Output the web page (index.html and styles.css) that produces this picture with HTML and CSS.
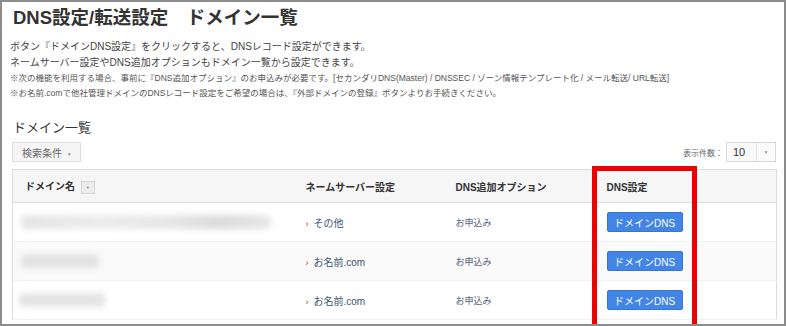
FILE: index.html
```html
<!DOCTYPE html>
<html lang="ja">
<head>
    <meta charset="UTF-8">
    <title>DNS設定/転送設定 ドメイン一覧</title>
    <link rel="stylesheet" href="styles.css">
</head>
<body>
    <div class="frame">
        <h1 class="title">DNS設定/転送設定　ドメイン一覧</h1>
        <div class="intro">
            <p class="lead">ボタン『ドメインDNS設定』をクリックすると、DNSレコード設定ができます。</p>
            <p class="lead">ネームサーバー設定やDNS追加オプションもドメイン一覧から設定できます。</p>
            <p class="note">※次の機能を利用する場合、事前に『DNS追加オプション』のお申込みが必要です。[セカンダリDNS(Master) / DNSSEC / ゾーン情報テンプレート化 / メール転送/ URL転送]</p>
            <p class="note">※お名前.comで他社管理ドメインのDNSレコード設定をご希望の場合は、『外部ドメインの登録』ボタンよりお手続きください。</p>
        </div>

        <h2 class="subtitle">ドメイン一覧</h2>

        <div class="toolbar">
            <button class="filter-btn">検索条件 <span class="caret">▼</span></button>
            <div class="per-page">
                <span>表示件数：</span>
                <div class="select">
                    <span class="select-value">10</span>
                    <span class="select-arrow">▼</span>
                </div>
            </div>
        </div>

        <div class="table-wrap">
            <table class="domains">
                <colgroup>
                    <col class="c-name">
                    <col class="c-ns">
                    <col class="c-opt">
                    <col class="c-dns">
                </colgroup>
                <thead>
                    <tr>
                        <th>ドメイン名 <span class="sort">▼</span></th>
                        <th>ネームサーバー設定</th>
                        <th>DNS追加オプション</th>
                        <th>DNS設定</th>
                    </tr>
                </thead>
                <tbody>
                    <tr>
                        <td><span class="blur blur-long"></span></td>
                        <td><a class="ns-link" href="#"><span class="arrow">›</span>その他</a></td>
                        <td><a class="opt-link" href="#">お申込み</a></td>
                        <td><button class="dns-btn">ドメインDNS</button></td>
                    </tr>
                    <tr class="alt">
                        <td><span class="blur blur-short"></span></td>
                        <td><a class="ns-link" href="#"><span class="arrow">›</span>お名前.com</a></td>
                        <td><a class="opt-link" href="#">お申込み</a></td>
                        <td><button class="dns-btn">ドメインDNS</button></td>
                    </tr>
                    <tr>
                        <td><span class="blur blur-mid"></span></td>
                        <td><a class="ns-link" href="#"><span class="arrow">›</span>お名前.com</a></td>
                        <td><a class="opt-link" href="#">お申込み</a></td>
                        <td><button class="dns-btn">ドメインDNS</button></td>
                    </tr>
                </tbody>
            </table>
            <div class="highlight"></div>
        </div>
    </div>
</body>
</html>
```

FILE: styles.css
```css
html {
    font-family: "Liberation Sans", "Noto Sans CJK JP", sans-serif;
    color: #333;
}

body {
    margin: 0;
}

.frame {
    box-sizing: border-box;
    width: 786px;
    height: 326px;
    border: 2px solid #8c8c8c;
    background: #fff;
    overflow: hidden;
}

.title {
    margin: 4px 0 0 11px;
    font-size: 18.5px;
    line-height: 24px;
    font-weight: bold;
    color: #333;
}

.intro {
    margin: 9px 0 0 8px;
}

.intro p {
    margin: 0;
    white-space: nowrap;
}

.lead {
    font-size: 10px;
    line-height: 16px;
    color: #444;
}

.note {
    font-size: 8.5px;
    line-height: 15px;
    color: #555;
}

.subtitle {
    margin: 18px 0 0 11px;
    font-size: 13px;
    line-height: 18px;
    font-weight: normal;
    color: #333;
}

.toolbar {
    display: flex;
    justify-content: space-between;
    align-items: flex-end;
    margin: 5px 8px 0 10px;
}

.filter-btn {
    height: 20px;
    padding: 0 8px 0 9px;
    border: 1px solid #dcdcdc;
    background: #f5f5f5;
    font-family: inherit;
    font-size: 10px;
    color: #666;
}

.caret {
    font-size: 5px;
    color: #999;
    vertical-align: middle;
    margin-left: 2px;
}

.per-page {
    display: flex;
    align-items: center;
    gap: 3px;
    font-size: 8px;
    color: #666;
}

.select {
    display: flex;
    height: 20px;
    width: 50px;
    box-sizing: border-box;
    border: 1px solid #d8d8d8;
    background: #fafafa;
}

.select-value {
    flex: 1;
    padding-left: 6px;
    font-size: 11px;
    line-height: 19px;
    color: #333;
}

.select-arrow {
    width: 18px;
    border-left: 1px solid #e2e2e2;
    text-align: center;
    font-size: 5px;
    line-height: 19px;
    color: #999;
}

.table-wrap {
    position: relative;
    margin: 7px 8px 0 10px;
}

.domains {
    width: 764px;
    border-collapse: collapse;
    table-layout: fixed;
    border: 1px solid #dcdcdc;
}

.c-name { width: 281px; }
.c-ns { width: 150px; }
.c-opt { width: 151px; }
.c-dns { width: 182px; }

.domains th {
    height: 32px;
    padding: 0 0 0 12px;
    text-align: left;
    font-size: 10px;
    font-weight: bold;
    color: #333;
    background: #f6f6f6;
    border-bottom: 1px solid #dcdcdc;
}

.domains td {
    height: 38px;
    padding: 0 0 0 12px;
    font-size: 10px;
    border-bottom: 1px solid #f0f0f0;
}

.domains tr.alt td {
    background: #fafafa;
}

.sort {
    display: inline-block;
    width: 12px;
    height: 11px;
    margin-left: 3px;
    border: 1px solid #d5d5d5;
    background: #ececec;
    font-size: 4px;
    line-height: 11px;
    text-align: center;
    color: #888;
    vertical-align: middle;
    font-weight: normal;
}

.blur {
    display: block;
    height: 14px;
    margin-left: -4px;
    border-radius: 4px;
    filter: blur(3px);
}

.blur-long {
    width: 250px;
    background: linear-gradient(90deg, #e4e4e4 0%, #ececec 30%, #e6e6e6 60%, #dadada 80%, #e8e8e8 100%);
}

.blur-short {
    width: 78px;
    background: #e2e2e2;
}

.blur-mid {
    width: 86px;
    margin-left: -6px;
    background: #e4e4e4;
}

.ns-link {
    color: #3b5375;
    text-decoration: none;
    font-size: 10px;
}

.arrow {
    color: #b33;
    margin-right: 5px;
    font-size: 9px;
}

.opt-link {
    color: #55647c;
    text-decoration: none;
    font-size: 9px;
}

.dns-btn {
    width: 76px;
    height: 20px;
    padding: 0;
    border: 1px solid #3575d5;
    border-radius: 2px;
    background: #4285e4;
    color: #fff;
    font-family: inherit;
    font-size: 10px;
}

.highlight {
    position: absolute;
    left: 580px;
    top: -3px;
    width: 95px;
    height: 153px;
    border: 5px solid #ee0000;
}
```
